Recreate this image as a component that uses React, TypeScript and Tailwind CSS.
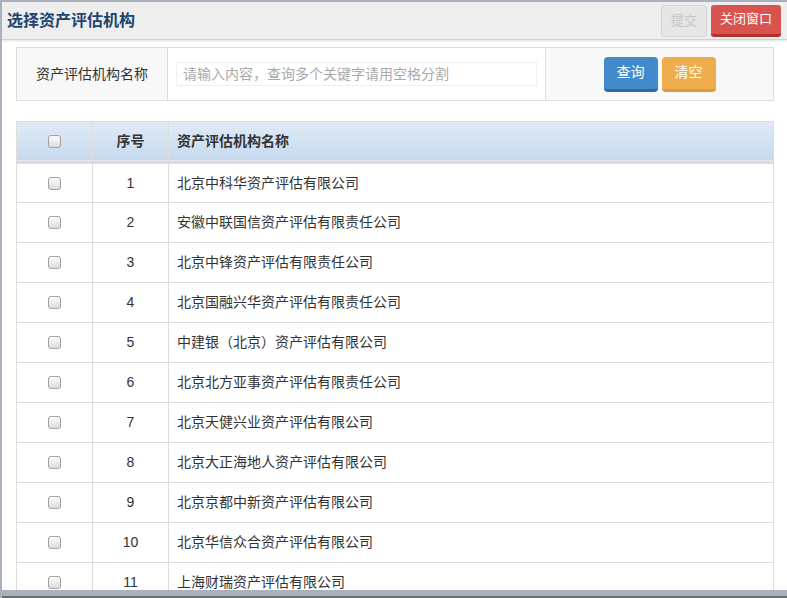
import React from "react";

const rows = [
  "北京中科华资产评估有限公司",
  "安徽中联国信资产评估有限责任公司",
  "北京中锋资产评估有限责任公司",
  "北京国融兴华资产评估有限责任公司",
  "中建银（北京）资产评估有限公司",
  "北京北方亚事资产评估有限责任公司",
  "北京天健兴业资产评估有限公司",
  "北京大正海地人资产评估有限公司",
  "北京京都中新资产评估有限公司",
  "北京华信众合资产评估有限公司",
  "上海财瑞资产评估有限公司",
];

function Check() {
  return (
    <span className="inline-block w-[13px] h-[13px] rounded-[3px] border border-[#a0a0a0] bg-gradient-to-b from-[#fcfcfc] to-[#dcdcdc]" />
  );
}

export default function App() {
  return (
    <div
      className="w-[787px] h-[598px] overflow-hidden flex flex-col bg-white border-l-2 border-t-2 border-[#a9b1bc] text-[#333] text-[14px]"
      style={{ fontFamily: '"Liberation Sans", "Noto Sans CJK SC", sans-serif' }}
    >
      {/* header */}
      <div className="h-[38px] shrink-0 flex items-center justify-between bg-[#eeeeee] border-b border-[#d0d0d0] shadow-[0_1px_2px_rgba(0,0,0,0.12)] pl-[5px] pr-[6px]">
        <h1 className="text-[16px] font-bold text-[#1e4470]">选择资产评估机构</h1>
        <div className="flex gap-[4px]">
          <button className="w-[46px] h-[32px] rounded-[3px] border border-[#d6d6d6] bg-[#e6e6e6] text-[13px] text-[#c4c4c4]">提交</button>
          <button className="w-[70px] h-[32px] rounded-[3px] bg-[#d9534f] border-b-[3px] border-[#b3302c] text-[13px] text-white">关闭窗口</button>
        </div>
      </div>

      <div className="flex-1 overflow-hidden pl-[14px] pr-[13px] pt-[7px]">
        {/* search */}
        <div className="flex h-[54px] border border-[#dddddd] bg-[#f8f8f8]">
          <div className="w-[151px] flex items-center justify-center border-r border-[#dddddd]">资产评估机构名称</div>
          <div className="w-[378px] flex items-center bg-white border-r border-[#dddddd] pl-[8px]">
            <input
              className="w-[361px] h-[24px] border border-[#f0f0f0] px-[6px] text-[14px] outline-none placeholder:text-[#a9a9a9]"
              placeholder="请输入内容，查询多个关键字请用空格分割"
            />
          </div>
          <div className="flex-1 flex items-center justify-center gap-[4px]">
            <button className="w-[54px] h-[35px] rounded-[4px] bg-[#428bca] border-b-[3px] border-[#2b6aa4] text-white">查询</button>
            <button className="w-[54px] h-[35px] rounded-[4px] bg-[#f0ad4e] border-b-[3px] border-[#dc9a3c] text-white">清空</button>
          </div>
        </div>

        {/* table */}
        <table className="mt-[20px] w-full border-collapse border border-[#dddddd]">
          <thead>
            <tr className="h-[41px] bg-gradient-to-b from-[#e0ebf6] to-[#c6d9ee] border-b-[3px] border-[#dddddd]">
              <th className="w-[76px] border-r border-[#dddddd]">
                <div className="flex justify-center"><Check /></div>
              </th>
              <th className="w-[76px] border-r border-[#dddddd] font-bold">序号</th>
              <th className="text-left pl-[8px] font-bold">资产评估机构名称</th>
            </tr>
          </thead>
          <tbody>
            {rows.map((name, i) => (
              <tr key={i} className="h-[40px] border-b border-[#dddddd]">
                <td className="border-r border-[#dddddd]">
                  <div className="flex justify-center"><Check /></div>
                </td>
                <td className="border-r border-[#dddddd] text-center">{i + 1}</td>
                <td className="pl-[8px]">{name}</td>
              </tr>
            ))}
          </tbody>
        </table>
      </div>

      <div className="h-[8px] shrink-0 bg-[#a9b1bc] border-b-2 border-[#6e6e6e]" />
    </div>
  );
}
